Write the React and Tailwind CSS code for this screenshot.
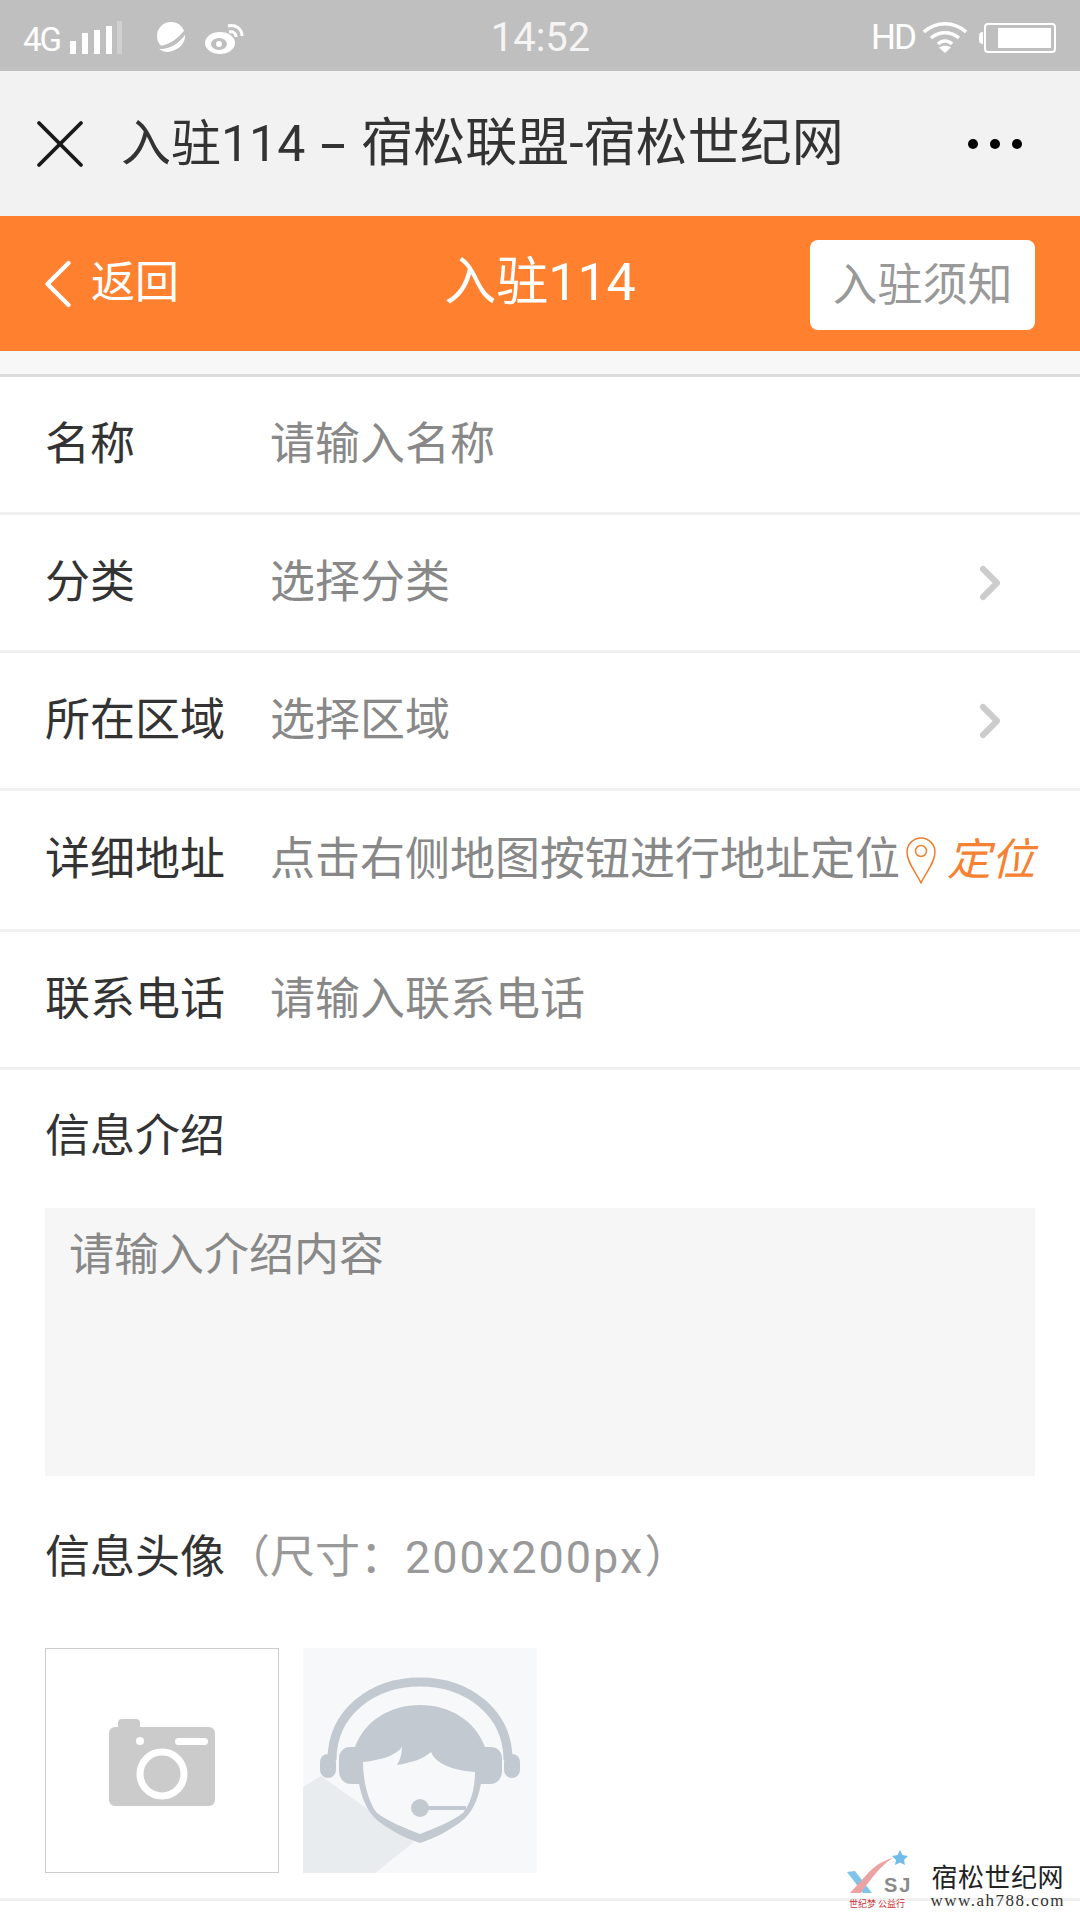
import React from 'react';
import { X, ChevronLeft, ChevronRight } from 'lucide-react';

const Row = ({ label, placeholder, arrow, children, height = 'h-[138px]' }) => (
    <div className={`flex items-center ${height} pl-[45px] pr-[45px] border-b-[3px] border-[#f0f0f0]`}>
        <span className="w-[225px] shrink-0 text-[45px] text-[#333]">{label}</span>
        <span className="text-[45px] text-[#888] whitespace-nowrap">{placeholder}</span>
        {arrow && <ChevronRight className="ml-auto mr-[17px] text-[#ccc]" size={56} strokeWidth={2.6} />}
        {children}
    </div>
);

const App = () => {
    return (
        <div className="relative w-[1080px] h-[1920px] overflow-hidden bg-white" style={{ fontFamily: 'Roboto, "Noto Sans CJK SC", "Noto Sans", sans-serif' }}>
            {/* status bar */}
            <div className="flex items-center h-[71px] pt-[4px] pl-[23px] pr-[22px] bg-[#bfbfbf] text-white">
                <div className="flex-1 flex items-center">
                    <span className="text-[33px] leading-none tracking-[-2px] mt-[3px]">4G</span>
                    <svg className="ml-[10px]" width="54" height="34" viewBox="0 0 54 34" fill="white">
                        <rect x="0" y="20" width="6" height="13" />
                        <rect x="12" y="12" width="6" height="21" />
                        <rect x="24" y="9" width="6" height="24" />
                        <rect x="36" y="5" width="6" height="28" />
                        <rect x="47" y="0" width="5" height="33" fill="#d0d0d0" />
                    </svg>
                    <svg className="ml-[30px]" width="34" height="34" viewBox="0 0 34 34" fill="white">
                        <circle cx="17" cy="15" r="14" />
                        <path d="M1 25 C 12 26 26 18 33 5 L34 8 C 29 22 14 31 2 28 Z" fill="#bfbfbf" />
                        <path d="M5 28 C 14 29 25 23 31 14 C 29 26 16 36 5 28 Z" fill="white" />
                    </svg>
                    <svg className="ml-[16px]" width="42" height="34" viewBox="0 0 42 34" fill="none">
                        <ellipse cx="16" cy="22" rx="15" ry="11" fill="white" />
                        <ellipse cx="15" cy="23" rx="8" ry="6" fill="#bfbfbf" />
                        <circle cx="15" cy="23" r="3" fill="white" />
                        <path d="M24 5 C 32 3 38 8 38 15" stroke="white" strokeWidth="3" />
                        <path d="M25 11 C 29 10 32 12 32 16" stroke="white" strokeWidth="3" />
                    </svg>
                </div>
                <span className="text-[40px] leading-none text-[#f4f4f4]">14:52</span>
                <div className="flex-1 flex items-center justify-end">
                    <span className="text-[35px] leading-none tracking-[-2px]">HD</span>
                    <svg className="ml-[8px] mr-[12px]" width="44" height="32" viewBox="0 0 44 32" fill="none" stroke="white" strokeWidth="3.5">
                        <path d="M1 10 C 13 -1 31 -1 43 10" />
                        <path d="M8 16 C 16 9 28 9 36 16" />
                        <path d="M15 22 C 19 18 25 18 29 22" />
                        <path d="M22 31 L16 25.5 C 20 23 24 23 28 25.5 Z" fill="white" stroke="none" />
                    </svg>
                    <div className="w-[4px] h-[12px] bg-white rounded-l-sm mr-[1px]" />
                    <div className="w-[72px] h-[30px] rounded-[4px] border-2 border-white p-[3px] pl-[12px] mr-[2px]">
                        <div className="w-full h-full bg-white" />
                    </div>
                </div>
            </div>

            {/* wechat title bar */}
            <div className="flex items-center h-[145px] bg-[#f2f2f2]">
                <X className="ml-[18px] text-[#1a1a1a]" size={84} strokeWidth={1.1} />
                <div className="flex items-center ml-[19px] text-[#333] whitespace-nowrap">
                    <span className="text-[50px] leading-none">入驻114</span>
                    <span className="w-[22px] h-[4px] ml-[17px] mr-[17px] mt-[4px] bg-[#333]" />
                    <span className="text-[52px] leading-none">宿松联盟-宿松世纪网</span>
                </div>
                <div className="flex gap-[12px] ml-auto mr-[58px]">
                    <span className="w-[10px] h-[10px] rounded-full bg-black" />
                    <span className="w-[10px] h-[10px] rounded-full bg-black" />
                    <span className="w-[10px] h-[10px] rounded-full bg-black" />
                </div>
            </div>

            {/* orange header */}
            <div className="flex items-center h-[135px] px-[45px] bg-[#ff8130] text-white">
                <div className="flex-1 flex items-center">
                    <ChevronLeft className="-ml-[29px]" size={84} strokeWidth={1.25} />
                    <span className="-ml-[9px] mb-[2px] text-[44px]">返回</span>
                </div>
                <span className="mb-[2px] text-[52px] leading-none whitespace-nowrap">入驻114</span>
                <div className="flex-1 flex justify-end">
                    <div className="flex items-center justify-center w-[225px] h-[90px] mt-[2px] pt-[2px] rounded-[8px] bg-white text-[45px] text-[#999]">入驻须知</div>
                </div>
            </div>

            {/* form */}
            <div className="h-[26px] bg-[#f7f7f7] border-b-[3px] border-[#dcdcdc]" />
            <Row label="名称" placeholder="请输入名称" />
            <Row label="分类" placeholder="选择分类" arrow />
            <Row label="所在区域" placeholder="选择区域" arrow />
            <Row label="详细地址" placeholder="点击右侧地图按钮进行地址定位" height="h-[141px]">
                <svg className="ml-[5px] shrink-0" width="32" height="48" viewBox="0 0 32 48" fill="none" stroke="#f08030" strokeWidth="1.5">
                    <path d="M16 47 C 10 35 2 26 2 16 A 14 14 0 0 1 30 16 C 30 26 22 35 16 47 Z" />
                    <circle cx="16" cy="15" r="5.5" />
                </svg>
                <span className="ml-[10px] text-[44px] italic text-[#f58233] whitespace-nowrap">定位</span>
            </Row>
            <Row label="联系电话" placeholder="请输入联系电话" />

            <div className="px-[45px]">
                <div className="flex items-center h-[138px] pb-[4px] text-[45px] text-[#333]">信息介绍</div>
                <div className="h-[268px] px-[24px] py-[14px] bg-[#f6f6f6] text-[45px] text-[#888]">请输入介绍内容</div>
                <div className="flex items-center h-[166px] pb-[2px] text-[45px] text-[#333] whitespace-nowrap">
                    信息头像<span className="text-[#999]">（尺寸：<span className="tracking-[2px]">200x200px</span>）</span>
                </div>
                <div className="flex gap-[24px] mt-[6px]">
                    <div className="flex items-center justify-center w-[234px] h-[225px] border border-[#ccc]">
                        <svg className="mt-[4px]" width="108" height="88" viewBox="0 0 108 88">
                            <path d="M1 14 A6 6 0 0 1 7 8 H10 V4 A4 4 0 0 1 14 0 H28 A4 4 0 0 1 32 4 V8 H101 A6 6 0 0 1 107 14 V81 A6 6 0 0 1 101 87 H7 A6 6 0 0 1 1 81 Z" fill="#cbcbcb" />
                            <circle cx="32" cy="22" r="4" fill="white" />
                            <rect x="67" y="19" width="33" height="7" rx="3.5" fill="white" />
                            <circle cx="54" cy="55" r="22" fill="none" stroke="white" strokeWidth="7" />
                        </svg>
                    </div>
                    <svg width="234" height="225" viewBox="0 0 234 225">
                        <rect width="234" height="225" fill="#f7f8f9" />
                        <path d="M0 139 L18 128 L111 194 L72 225 H0 Z" fill="#e9ecef" />
                        <path d="M29 112 C 29 64 70 34 117 34 C 164 34 205 64 205 112" fill="none" stroke="#c2c9d1" strokeWidth="9" />
                        <rect x="17" y="106" width="16" height="24" rx="8" fill="#c2c9d1" />
                        <rect x="201" y="106" width="16" height="24" rx="8" fill="#c2c9d1" />
                        <path d="M36 110 A11 11 0 0 1 47 99 H52 C 62 72 88 57 117 57 C 146 57 172 72 182 99 H188 A11 11 0 0 1 199 110 V124 A12 12 0 0 1 187 136 H178 C 174 155 168 165 160 172 C 148 182 132 190 117 195 C 102 190 86 182 74 172 C 66 165 60 155 56 136 H48 A12 12 0 0 1 36 124 Z" fill="#c2c9d1" />
                        <path d="M60 114 C 78 112 92 108 99 99 C 99 106 97 112 94 117 C 108 115 120 111 128 104 C 132 114 146 122 172 124 C 172 140 168 155 160 165 C 148 174 132 180 117 186 C 102 180 86 174 74 165 C 66 155 60 135 60 114 Z" fill="#f7f8f9" />
                        <circle cx="117" cy="160" r="9" fill="#c2c9d1" />
                        <path d="M120 160 H163" stroke="#c2c9d1" strokeWidth="4" />
                    </svg>
                </div>
            </div>
            <div className="mt-[25px] h-[3px] bg-[#f0f0f0]" />

            {/* watermark */}
            <div className="absolute right-[15px] bottom-[10px] flex items-end">
                <svg width="70" height="60" viewBox="0 0 70 60">
                    <path d="M0 22 L8 21 L25 43 H16 Z" fill="#7fc4e8" />
                    <path d="M3 43 L22 22 C 30 14 38 10 46 8 C 38 13 30 20 14 43 Z" fill="#eba3a3" />
                    <polygon points="53,0 55.5,5 61,6 57,10 58,15 53,12.5 48,15 49,10 45,6 50.5,5" fill="#6fbde8" />
                    <text x="37" y="42" fontSize="20" fontWeight="700" letterSpacing="2" fill="#8a8a8a" fontFamily="Liberation Sans, sans-serif">SJ</text>
                    <text x="2" y="57" fontSize="9" fill="#cc3333" fontFamily="Noto Sans CJK SC, sans-serif">世纪梦 公益行</text>
                </svg>
                <div className="ml-[13px] flex flex-col items-center">
                    <span className="text-[26px] leading-[32px] tracking-[0.5px] text-[#222]" style={{ fontFamily: '"Noto Sans CJK SC", sans-serif' }}>宿松世纪网</span>
                    <span className="text-[17px] leading-[18px] tracking-[1.5px] text-[#333]" style={{ fontFamily: '"Liberation Serif", serif' }}>www.ah788.com</span>
                </div>
            </div>
        </div>
    );
};

export default App;
